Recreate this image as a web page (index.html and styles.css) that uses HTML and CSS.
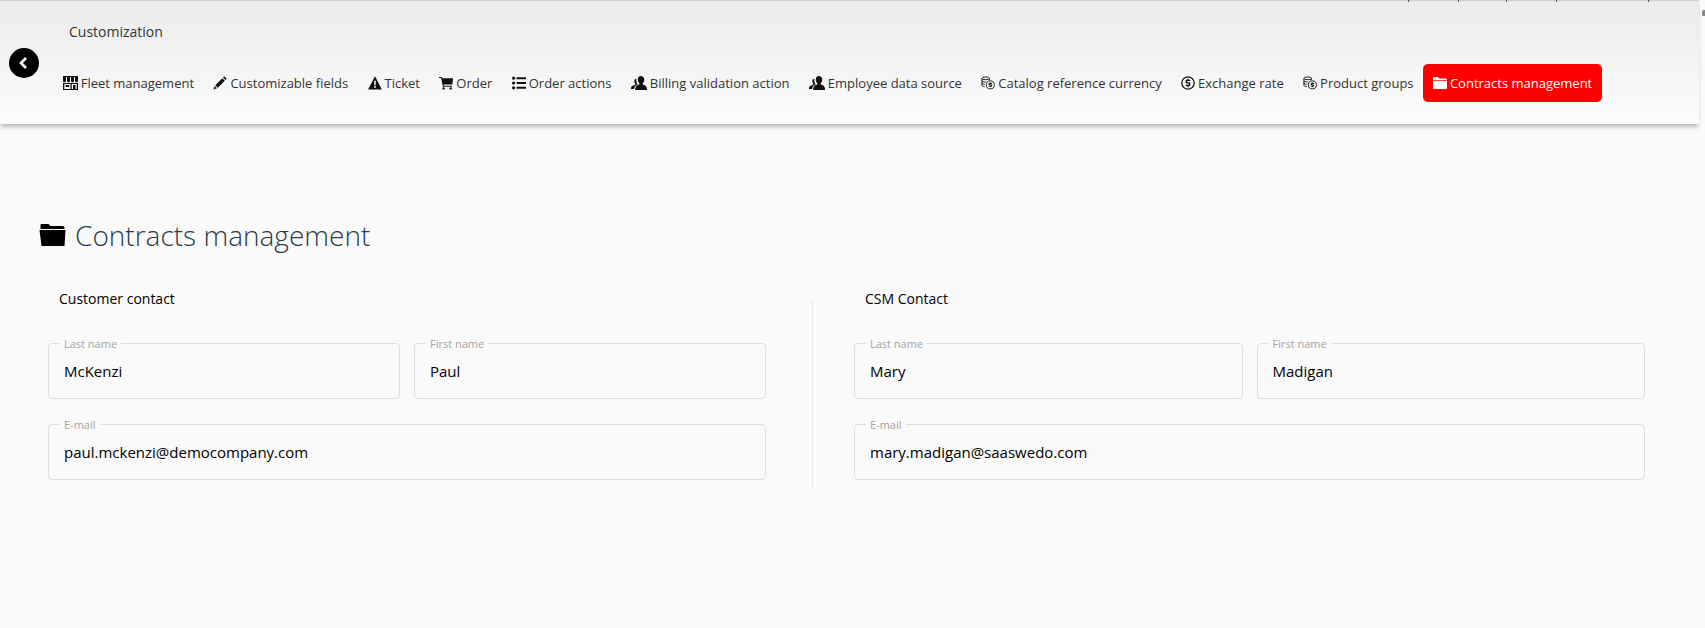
FILE: index.html
```html
<!DOCTYPE html>
<html lang="en">
<head>
<meta charset="utf-8">
<title>Contracts management</title>
<link rel="stylesheet" href="styles.css">
</head>
<body>
<svg class="defs" width="0" height="0" aria-hidden="true">
  <symbol id="i-store" viewBox="1 0 12 14" preserveAspectRatio="none"><path d="M1 0h12v1H1z"/><path d="M1 1h2.400v4a1.200 1.200 0 0 1-2.400 0zM4.200 1h2.400v4a1.200 1.200 0 0 1-2.400 0zM7.400 1h2.400v4a1.200 1.200 0 0 1-2.400 0zM10.600 1H13v4a1.200 1.200 0 0 1-2.400 0z"/><path fill-rule="evenodd" d="M1 7h12v7H1zM2 8v5h5V8zM8 8v5h4V8zM3 9h3v2H3z"/><path d="M9 9h2v4H9z"/></symbol>
  <symbol id="i-pencil" viewBox="0 0 14 14"><path d="M11.200.3l2.500 2.500-1.200 1.200L10 1.500zM9.300 2.200l2.500 2.500-7 7-2.500-2.500zM1.700 10l2.300 2.300-3.500 1.200z"/></symbol>
  <symbol id="i-warn" viewBox="0 0 14 14"><path fill-rule="evenodd" d="M7 .3l6.900 13.200H.1zM6.100 4.800l.3 4.600h1.200l.3-4.600zM6.100 10.200v1.600h1.800v-1.600z"/></symbol>
  <symbol id="i-cart" viewBox="0 0 14 14"><path d="M0 1h3l.4 1.200H14l-.6 6.300H4.500l.3 1.200H13v1H3.800L2.200 2H0z"/><circle cx="4.600" cy="12.400" r="1.200"/><circle cx="11.600" cy="12.400" r="1.200"/></symbol>
  <symbol id="i-list" viewBox="0 0 14 14"><circle cx="1.600" cy="2.200" r="1.600"/><circle cx="1.600" cy="7" r="1.600"/><circle cx="1.600" cy="11.800" r="1.600"/><path d="M4.600 1.200H14v2H4.600zM4.600 6H14v2H4.600zM4.600 10.800H14v2H4.600z"/></symbol>
  <symbol id="i-users" viewBox="0 0 16 14"><path d="M9.800 0C8 0 6.800 1.400 6.800 3.500c0 1.600.6 2.900 1.500 3.600v1.500C6.300 9.300 4.500 10 4.200 12.800V14H16v-1.200c-.3-2.800-2.100-3.500-4.200-4.200V7.100c.9-.7 1.500-2 1.500-3.600C13.300 1.400 11.600 0 9.800 0z"/><path d="M5.300 2.800C4 3 3.300 4 3.300 5.300c0 1.100.4 2 1 2.500v1C2.400 9.300.4 10 0 11.800V13h3.100c.3-2.600 1.600-3.600 3.700-4.400-.9-1-1.400-2.400-1.500-3.900z"/></symbol>
  <symbol id="i-coins" viewBox="0 0 15 14"><g fill="none" stroke="currentColor" stroke-width="1"><ellipse cx="5" cy="2" rx="4" ry="1.500"/><path d="M1 2v2.500c0 .8 1.800 1.500 4 1.500M1 4.500V7c0 .8 1.500 1.400 3 1.500M1 7v2.500c0 .8 1.500 1.400 3 1.500M9 2v2"/><circle cx="10" cy="9" r="4.300"/></g><path d="M9.500 6.300h1v.7h1.300v1H9.700v.600h1.600a.8.800 0 0 1 .6.700v.800a.8.800 0 0 1-.7.700h-.7v.8h-1v-.8H8.200v-1h2.200v-.6H8.800a.8.800 0 0 1-.7-.7v-.8a.8.800 0 0 1 .7-.7h.7z"/></symbol>
  <symbol id="i-dollar" viewBox="0 0 14 14"><circle cx="7" cy="7" r="6.200" fill="none" stroke="currentColor" stroke-width="1.300"/><path d="M6.400 2.800h1.200v1h1.700V5H6.200v1.300h2.300a.8.800 0 0 1 .8.800v2a.8.800 0 0 1-.8.800h-.9v1.300H6.400V10H4.700V8.800h3.100V7.500H5.500a.8.800 0 0 1-.8-.8v-2a.8.800 0 0 1 .8-.9h.9z"/></symbol>
  <symbol id="i-folder" viewBox="0 0 14 12"><path d="M1 0h4l1.500 1.500H13a1 1 0 0 1 1 1V3H0V1a1 1 0 0 1 1-1z"/><path d="M0 3.800h14V11a1 1 0 0 1-1 1H1a1 1 0 0 1-1-1z"/></symbol>
</svg>

<header class="topbar">
  <span class="tick tick-a"></span><span class="tick tick-b"></span><span class="tick tick-c"></span><span class="tick tick-d"></span><span class="tick tick-e"></span>
  <a class="back" href="#" aria-label="Back">
    <svg viewBox="0 0 14 14" width="14" height="14"><path d="M9 2L4 7l5 5" fill="none" stroke="#fff" stroke-width="2.600"/></svg>
  </a>
  <div class="topbar-body">
    <div class="crumb">Customization</div>
    <nav class="tabs">
      <a class="tab" href="#"><svg class="ic ic-store"><use href="#i-store"/></svg>Fleet management</a>
      <a class="tab" href="#"><svg class="ic"><use href="#i-pencil"/></svg>Customizable fields</a>
      <a class="tab" href="#"><svg class="ic"><use href="#i-warn"/></svg>Ticket</a>
      <a class="tab" href="#"><svg class="ic"><use href="#i-cart"/></svg>Order</a>
      <a class="tab" href="#"><svg class="ic"><use href="#i-list"/></svg>Order actions</a>
      <a class="tab" href="#"><svg class="ic ic-wide"><use href="#i-users"/></svg>Billing validation action</a>
      <a class="tab" href="#"><svg class="ic ic-wide"><use href="#i-users"/></svg>Employee data source</a>
      <a class="tab" href="#"><svg class="ic"><use href="#i-coins"/></svg>Catalog reference currency</a>
      <a class="tab" href="#"><svg class="ic"><use href="#i-dollar"/></svg>Exchange rate</a>
      <a class="tab" href="#"><svg class="ic"><use href="#i-coins"/></svg>Product groups</a>
      <a class="tab tab-active" href="#"><svg class="ic"><use href="#i-folder"/></svg>Contracts management</a>
    </nav>
  </div>
</header>
<span class="edge-mark"></span>

<main class="page">
  <h1 class="title"><svg class="title-ic" viewBox="0 0 28 24"><path d="M3 1h7l2 2h12a2 2 0 0 1 2 2v1H2V2a1 1 0 0 1 1-1z"/><path d="M1 7h26l-1 16H3z"/></svg>Contracts management</h1>
  <div class="columns">
    <section class="col">
      <h2 class="col-title">Customer contact</h2>
      <div class="row row-two">
        <fieldset class="field"><legend>Last name</legend><div class="value">McKenzi</div></fieldset>
        <fieldset class="field"><legend>First name</legend><div class="value">Paul</div></fieldset>
      </div>
      <div class="row">
        <fieldset class="field"><legend>E-mail</legend><div class="value">paul.mckenzi@democompany.com</div></fieldset>
      </div>
    </section>
    <section class="col col-right">
      <h2 class="col-title">CSM Contact</h2>
      <div class="row row-two">
        <fieldset class="field"><legend>Last name</legend><div class="value">Mary</div></fieldset>
        <fieldset class="field"><legend>First name</legend><div class="value">Madigan</div></fieldset>
      </div>
      <div class="row">
        <fieldset class="field"><legend>E-mail</legend><div class="value">mary.madigan@saaswedo.com</div></fieldset>
      </div>
    </section>
  </div>
</main>
</body>
</html>
```

FILE: styles.css
```css
* { box-sizing: border-box; }
html, body { margin: 0; height: 100%; }
body {
  background: #fafafa;
  color: #000;
  font-family: "Open Sans", "Liberation Sans", sans-serif;
  overflow: hidden;
  position: relative;
}
.defs { position: absolute; }

.topbar {
  position: relative;
  display: flex;
  width: 1699px;
  height: 124px;
  border-top: 1px solid #cfcfcf;
  background: linear-gradient(#ebebeb, #fcfcfc);
  box-shadow: 0 4px 4px -1px rgba(0, 0, 0, .25);
}
.tick { position: absolute; top: -1px; width: 1px; height: 2px; background: #555; }
.tick-a { left: 1408px; }
.tick-b { left: 1458px; }
.tick-c { left: 1506px; }
.tick-d { left: 1556px; }
.tick-e { left: 1648px; }
.edge-mark {
  position: absolute;
  top: 10px;
  right: 0;
  width: 3px;
  height: 6px;
  background: #888;
  border-radius: 2px 0 0 0;
}

.back {
  flex: none;
  display: flex;
  align-items: center;
  justify-content: center;
  width: 30px;
  height: 30px;
  margin: 47px 0 0 9px;
  border-radius: 50%;
  background: #000;
}
.topbar-body { margin-left: 15px; }
.crumb {
  margin: 21px 0 0 15px;
  font-size: 14px;
  line-height: 20px;
  color: #333;
}
.tabs { display: flex; margin-top: 22px; }
.tab {
  display: flex;
  align-items: center;
  gap: 3px;
  height: 38px;
  padding: 0 9.7px;
  border-radius: 5px;
  font-size: 13px;
  color: #333;
  text-decoration: none;
  white-space: nowrap;
}
.ic { width: 14px; height: 14px; fill: #111; color: #111; flex: none; }
.ic-wide { width: 16px; }
.ic-store { margin-left: -1px; width: 15px; }
.tab-active { background: #f00; color: #fff; }
.tab-active .ic { fill: #fff; color: #fff; }

.page { padding: 0 60px 0 48px; }
.title {
  display: flex;
  align-items: center;
  gap: 8px;
  margin: 89px 0 0 -10px;
  font-size: 28px;
  font-weight: 300;
  line-height: 44px;
  color: #2b3a4a;
}
.title-ic { width: 29px; height: 24px; fill: #000; flex: none; }
.columns {
  display: grid;
  grid-template-columns: 718px 1fr;
  column-gap: 46px;
  margin-top: 32px;
}
.col { position: relative; }
.col-right { padding-left: 42px; }
.col-right::before {
  content: "";
  position: absolute;
  left: 0;
  top: 11px;
  width: 1px;
  height: 190px;
  background: #e8e8e8;
}
.col-title {
  margin: 0 0 29px 11px;
  font-size: 14px;
  font-weight: 400;
  line-height: 20px;
}
.row { display: grid; margin-bottom: 20px; }
.row-two { grid-template-columns: 1fr 1fr; column-gap: 14px; }
.field {
  min-width: 0;
  height: 61px;
  margin: 0;
  padding: 0 15px;
  border: 1px solid #dedede;
  border-radius: 4px;
}
.field legend {
  padding: 0 4px;
  margin-left: -4px;
  font-size: 11px;
  line-height: 11px;
  color: #a3a3a3;
}
.value {
  margin-top: 10px;
  font-size: 15px;
  line-height: 24px;
}
```
